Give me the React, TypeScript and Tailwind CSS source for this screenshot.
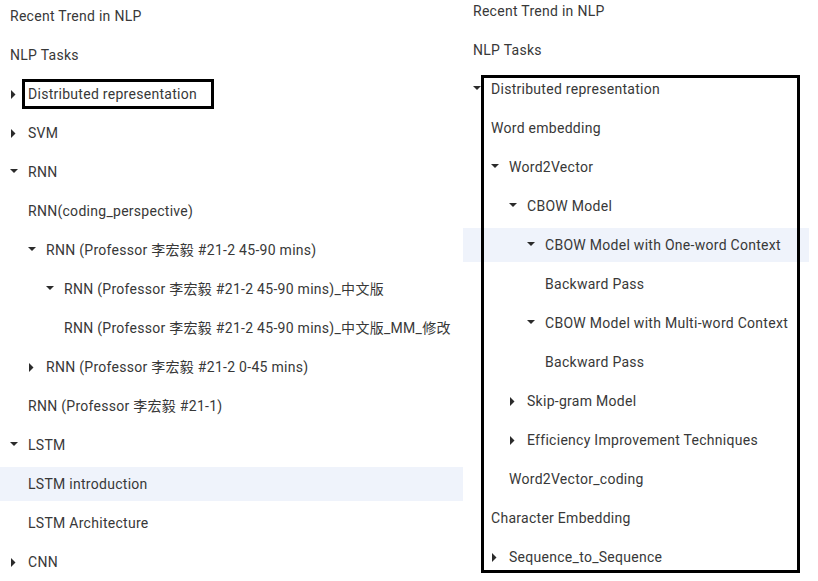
import React from "react";

type Item = { t: string; x: number; a?: "r" | "d"; hl?: boolean };

const left: Item[] = [
  { t: "Recent Trend in NLP", x: 10 },
  { t: "NLP Tasks", x: 10 },
  { t: "Distributed representation", x: 10, a: "r" },
  { t: "SVM", x: 10, a: "r" },
  { t: "RNN", x: 10, a: "d" },
  { t: "RNN(coding_perspective)", x: 28 },
  { t: "RNN (Professor 李宏毅 #21-2 45-90 mins)", x: 28, a: "d" },
  { t: "RNN (Professor 李宏毅 #21-2 45-90 mins)_中文版", x: 46, a: "d" },
  { t: "RNN (Professor 李宏毅 #21-2 45-90 mins)_中文版_MM_修改", x: 64 },
  { t: "RNN (Professor 李宏毅 #21-2 0-45 mins)", x: 28, a: "r" },
  { t: "RNN (Professor 李宏毅 #21-1)", x: 28 },
  { t: "LSTM", x: 10, a: "d" },
  { t: "LSTM introduction", x: 28, hl: true },
  { t: "LSTM Architecture", x: 28 },
  { t: "CNN", x: 10, a: "r" },
];

const right: Item[] = [
  { t: "Recent Trend in NLP", x: 10 },
  { t: "NLP Tasks", x: 10 },
  { t: "Distributed representation", x: 10, a: "d" },
  { t: "Word embedding", x: 28 },
  { t: "Word2Vector", x: 28, a: "d" },
  { t: "CBOW Model", x: 46, a: "d" },
  { t: "CBOW Model with One-word Context", x: 64, a: "d", hl: true },
  { t: "Backward Pass", x: 82 },
  { t: "CBOW Model with Multi-word Context", x: 64, a: "d" },
  { t: "Backward Pass", x: 82 },
  { t: "Skip-gram Model", x: 46, a: "r" },
  { t: "Efficiency Improvement Techniques", x: 46, a: "r" },
  { t: "Word2Vector_coding", x: 46 },
  { t: "Character Embedding", x: 28 },
  { t: "Sequence_to_Sequence", x: 28, a: "r" },
];

function Arrow({ a }: { a: "r" | "d" }) {
  return (
    <svg width="18" height="18" viewBox="0 0 18 18" className="shrink-0">
      {a === "r" ? (
        <path d="M1 5 L5.5 9.5 L1 14 Z" fill="#2b2b2b" />
      ) : (
        <path d="M0 6 L8 6 L4 10 Z" fill="#2b2b2b" />
      )}
    </svg>
  );
}

function Row({ it }: { it: Item }) {
  return (
    <div
      className={`flex h-[34px] items-center whitespace-nowrap ${it.hl ? "bg-[#eff3fb]" : ""}`}
      style={{ paddingLeft: it.x }}
    >
      {it.a && <Arrow a={it.a} />}
      <span>{it.t}</span>
    </div>
  );
}

export default function App() {
  return (
    <div
      className="relative flex h-[581px] w-[818px] overflow-hidden bg-white text-[14px] tracking-[0.28px] text-[#383838]"
      style={{ fontFamily: 'Roboto, "Noto Sans CJK TC", "Noto Sans CJK SC", sans-serif' }}
    >
      <div className="mt-[-1px] flex w-[463px] shrink-0 flex-col gap-[5px]">
        {left.map((it, i) => (
          <Row key={i} it={it} />
        ))}
      </div>
      <div className="mt-[-6px] flex w-[346px] shrink-0 flex-col gap-[5px]">
        {right.map((it, i) => (
          <Row key={i} it={it} />
        ))}
      </div>
      <div className="absolute left-[22px] top-[79px] h-[30px] w-[192px] border-[3px] border-black" />
      <div className="absolute left-[481px] top-[75px] h-[498px] w-[319px] border-[3px] border-black" />
    </div>
  );
}
